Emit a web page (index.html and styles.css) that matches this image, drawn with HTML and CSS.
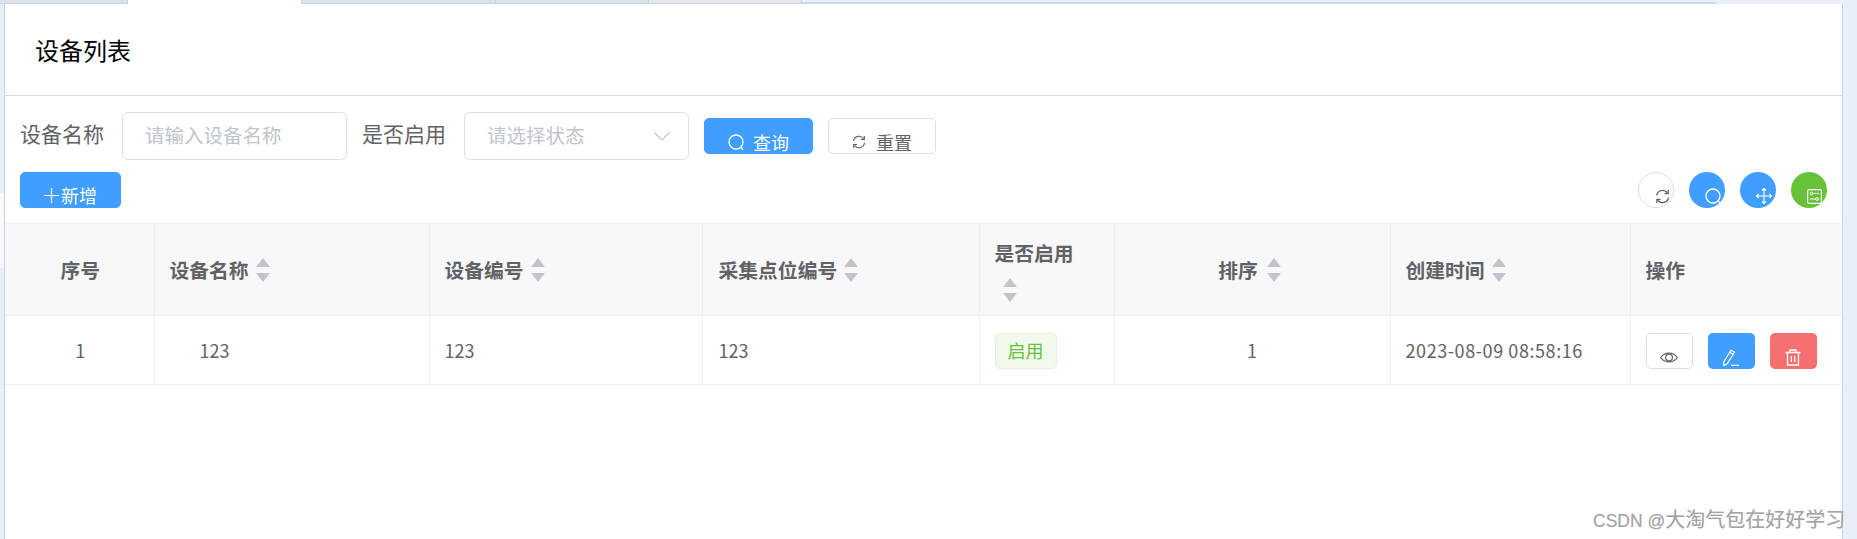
FILE: index.html
```html
<!DOCTYPE html>
<html lang="zh-CN">
<head>
    <meta charset="UTF-8">
    <title>设备列表</title>
    <link rel="stylesheet" href="styles.css">
</head>
<body>
    <div class="tabs">
        <div class="tab tab-grey tab-first"></div>
        <div class="tab tab-active"></div>
        <div class="tab tab-grey tab-third"></div>
        <div class="tab tab-grey tab-fourth"></div>
        <div class="tab tab-soft"></div>
        <div class="tab tab-line"></div>
    </div>

    <main class="card">
        <header class="card-head">
            <h2>设备列表</h2>
        </header>

        <form class="search-row">
            <label class="label">设备名称</label>
            <div class="field field-input"><span class="placeholder">请输入设备名称</span></div>
            <label class="label">是否启用</label>
            <div class="field field-select">
                <span class="placeholder">请选择状态</span>
                <svg class="chevron" width="16" height="9" viewBox="0 0 16 9"><path d="M.5.5 8 8 15.500.5" fill="none" stroke="#c0c4cc" stroke-width="1.200"/></svg>
            </div>
            <button type="button" class="btn btn-primary btn-query">
                <svg width="16" height="17" viewBox="0 0 16 17"><circle cx="8" cy="8" r="7" fill="none" stroke="#fff" stroke-width="1.300"/><path d="m12.800 13 2.400 3" stroke="#fff" stroke-width="1.300"/></svg>
                <span>查询</span>
            </button>
            <button type="button" class="btn btn-plain btn-reset">
                <svg width="14" height="14" viewBox="0 0 14 14"><path d="M1.500 6A5.600 5.600 0 0 1 11.500 3.500M12.500 8A5.600 5.600 0 0 1 2.500 10.500" fill="none" stroke="#606266" stroke-width="1.200"/><path d="M12.300 1v3.400H9M1.700 13V9.600H5" fill="none" stroke="#606266" stroke-width="1.200"/></svg>
                <span>重置</span>
            </button>
        </form>

        <div class="tool-row">
            <button type="button" class="btn btn-primary btn-add">
                <svg width="15" height="15" viewBox="0 0 15 15"><path d="M0 7.500h15M7.500 0v15" stroke="#fff" stroke-width="1.200"/></svg>
                <span>新增</span>
            </button>
            <div class="round-tools">
                <button type="button" class="round round-plain">
                    <svg width="15" height="15" viewBox="0 0 14 14"><path d="M1.500 6A5.600 5.600 0 0 1 11.500 3.500M12.500 8A5.600 5.600 0 0 1 2.500 10.500" fill="none" stroke="#606266" stroke-width="1.200"/><path d="M12.300 1v3.400H9M1.700 13V9.600H5" fill="none" stroke="#606266" stroke-width="1.200"/></svg>
                </button>
                <button type="button" class="round round-blue">
                    <svg width="17" height="17" viewBox="0 0 17 17"><circle cx="8" cy="8" r="7" fill="none" stroke="#fff" stroke-width="1.300"/><path d="m13 13 3 3" stroke="#fff" stroke-width="1.300"/></svg>
                </button>
                <button type="button" class="round round-blue">
                    <svg width="16" height="16" viewBox="0 0 16 16"><path d="M8 .5v15M.5 8h15M6 2.500 8 .5l2 2M6 13.500l2 2 2-2M2.500 6l-2 2 2 2M13.500 6l2 2-2 2" fill="none" stroke="#fff" stroke-width="1.200"/></svg>
                </button>
                <button type="button" class="round round-green">
                    <svg width="15" height="15" viewBox="0 0 15 15"><rect x=".6" y=".6" width="13.800" height="13.800" rx="1.500" fill="none" stroke="#fff" stroke-width="1.200"/><circle cx="4.500" cy="4.500" r="1.400" fill="none" stroke="#fff"/><circle cx="10" cy="10" r="1.400" fill="none" stroke="#fff"/><path d="M6 4.500h6M3 10h5.500" stroke="#fff"/></svg>
                </button>
            </div>
        </div>

        <table class="grid">
            <colgroup>
                <col class="col-index">
                <col class="col-name">
                <col class="col-code">
                <col class="col-point">
                <col class="col-status">
                <col class="col-sort">
                <col class="col-time">
                <col class="col-action">
            </colgroup>
            <thead>
                <tr>
                    <th class="center">序号</th>
                    <th><div class="th-cell">设备名称<i class="caret"></i></div></th>
                    <th><div class="th-cell">设备编号<i class="caret"></i></div></th>
                    <th class="cell-point"><div class="th-cell">采集点位编号<i class="caret"></i></div></th>
                    <th><div class="th-cell th-stack">是否启用<i class="caret"></i></div></th>
                    <th><div class="th-cell th-center">排序<i class="caret"></i></div></th>
                    <th><div class="th-cell">创建时间<i class="caret"></i></div></th>
                    <th>操作</th>
                </tr>
            </thead>
            <tbody>
                <tr>
                    <td class="center">1</td>
                    <td class="indent">123</td>
                    <td>123</td>
                    <td class="cell-point">123</td>
                    <td><span class="tag">启用</span></td>
                    <td class="center">1</td>
                    <td class="time">2023-08-09 08:58:16</td>
                    <td>
                        <div class="actions">
                            <button type="button" class="act act-plain">
                                <svg width="18" height="13" viewBox="0 0 18 13"><path d="M.6 6.500C4.500.6 13.500.6 17.400 6.500 13.500 12.400 4.500 12.400.6 6.500Z" fill="none" stroke="#606266" stroke-width="1.200"/><circle cx="9" cy="6.500" r="3.400" fill="none" stroke="#606266" stroke-width="1.200"/></svg>
                            </button>
                            <button type="button" class="act act-blue">
                                <svg width="16" height="17" viewBox="0 0 16 17"><path d="M8 1.200 11.500 3.300 4 15 .8 16.400.8 12.800ZM6.800 3.300l3.300 2.100" fill="none" stroke="#fff" stroke-width="1.200"/><path d="M8 16.300h8" stroke="#fff" stroke-width="1.200"/></svg>
                            </button>
                            <button type="button" class="act act-red">
                                <svg width="16" height="17" viewBox="0 0 16 17"><path d="M.5 3.500h15M5 3.500V1h6v2.500M2.500 3.500V16h11V3.500M6.300 7v6M9.700 7v6" fill="none" stroke="#fff" stroke-width="1.300"/></svg>
                            </button>
                        </div>
                    </td>
                </tr>
            </tbody>
        </table>
    </main>

    <div class="watermark">CSDN @<span class="watermark-cn">大淘气包在好好学习</span></div>
</body>
</html>
```

FILE: styles.css
```css
*{
    box-sizing: border-box;
}

body{
    margin: 0;
    width: 1857px;
    height: 539px;
    overflow: hidden;
    display: flex;
    flex-direction: column;
    background-color: #e9eff8;
    font-family: "Noto Sans CJK SC", "Noto Sans", sans-serif;
    color: #606266;
}

/* tabs row, only its bottom sliver is visible */
.tabs{
    display: flex;
    height: 4px;
    flex: none;
}

.tab{
    border-right: 1px solid #c9d1de;
}

.tab-grey{
    background-color: #dde3ed;
    border-bottom: 1px solid #ccd4e2;
}

.tab-first{ width: 128px; }
.tab-third{ width: 194px; }
.tab-fourth{ width: 153px; }

.tab-active{
    width: 174px;
    background-color: #fff;
}

.tab-soft{
    width: 153px;
    background-color: #e3e7ef;
    border-bottom: 1px solid #ccd4e2;
}

.tab-line{
    width: 914px;
    border-right: none;
    border-bottom: 2px solid #cdd6e6;
}

.card{
    position: relative;
    flex: 1;
    width: 1839px;
    margin-left: 4px;
    background-color: #fff;
    border-left: 1px solid #ccd4e4;
    border-right: 1px solid #ccd4e4;
}

/* lighter patch of the page behind, left of the card */
.card::before{
    content: "";
    position: absolute;
    left: -5px;
    top: 189px;
    width: 4px;
    height: 75px;
    background-color: #f7f9fc;
}

.card-head{
    height: 92px;
    padding: 0 0 1px 30px;
    display: flex;
    align-items: center;
    border-bottom: 1px solid #d3dbe8;
}

.card-head h2{
    margin: 0;
    font-size: 24px;
    font-weight: 400;
    color: #000;
}

.search-row{
    display: flex;
    align-items: flex-start;
    padding: 16px 0 0 15px;
}

.label{
    height: 48px;
    line-height: 42px;
    font-size: 21px;
    white-space: nowrap;
}

.field{
    height: 48px;
    display: flex;
    align-items: center;
    justify-content: space-between;
    padding: 0 18px 3px 22px;
    border: 1px solid #dcdfe6;
    border-radius: 6px;
}

.field-input{
    width: 225px;
    margin: 0 15px 0 18px;
}

.field-select{
    width: 225px;
    margin-left: 18px;
}

.chevron{
    margin-top: 3px;
}

.placeholder{
    font-size: 19.500px;
    color: #c0c4cc;
}

.btn{
    height: 36px;
    display: flex;
    align-items: center;
    justify-content: center;
    padding: 12px 0 0;
    overflow: hidden;
    font-family: inherit;
    font-size: 18px;
    border-radius: 5px;
}

.btn-primary{
    color: #fff;
    background-color: #409eff;
    border: 1px solid #409eff;
}

.btn-plain{
    color: #606266;
    background-color: #fff;
    border: 1px solid #dcdfe6;
}

.btn-query{
    width: 109px;
    margin: 6px 0 0 15px;
    gap: 9px;
}

.btn-reset{
    width: 108px;
    margin: 6px 0 0 15px;
    gap: 10px;
}

.btn-add{
    width: 101px;
    gap: 2px;
    padding-top: 10px;
}

.tool-row{
    display: flex;
    justify-content: space-between;
    padding: 12px 15px 0 15px;
}

.round-tools{
    display: flex;
    gap: 15px;
}

.round{
    width: 36px;
    height: 36px;
    display: flex;
    align-items: center;
    justify-content: center;
    padding: 12px 0 0 12px;
    border-radius: 50%;
    border: 1px solid transparent;
}

.round-plain{
    background-color: #fff;
    border-color: #dcdfe6;
}

.round-blue{
    background-color: #409eff;
}

.round-green{
    background-color: #67c23a;
    padding-left: 10px;
}

.grid{
    width: 1836px;
    margin-top: 15px;
    table-layout: fixed;
    border-collapse: collapse;
    font-size: 18px;
}

.col-index{ width: 149px; }
.col-name{ width: 275px; }
.col-code{ width: 273px; }
.col-point{ width: 277px; }
.col-status{ width: 135px; }
.col-sort{ width: 276px; }
.col-time{ width: 240px; }
.col-action{ width: 211px; }

.grid th,
.grid td{
    padding: 0 15px;
    text-align: left;
    border: 1px solid #ebeef5;
}

.grid th{
    height: 92px;
    font-size: 19.800px;
    font-weight: 700;
    background-color: #f8f8f9;
}

.grid td{
    height: 69px;
}

.grid .center{
    text-align: center;
}

.grid .indent{
    padding-left: 45px;
}

.grid .cell-point{
    padding-left: 16px;
}

.grid .time{
    letter-spacing: .58px;
}

.grid th:first-child,
.grid td:first-child{
    border-left: none;
    padding: 0 14px 0 16px;
}

.grid th:last-child,
.grid td:last-child{
    border-right: none;
}

.th-cell{
    display: flex;
    align-items: center;
    gap: 7px;
}

.th-stack{
    flex-direction: column;
    align-items: flex-start;
    gap: 11px;
}

.th-stack .caret{
    margin-left: 8px;
}

.th-center{
    justify-content: center;
    gap: 9px;
    padding-right: 4px;
}

.caret{
    display: flex;
    flex-direction: column;
    gap: 6px;
    width: 15px;
}

.caret::before,
.caret::after{
    content: "";
    width: 0;
    height: 0;
    border-left: 7.500px solid transparent;
    border-right: 7.500px solid transparent;
}

.caret::before{
    border-bottom: 9px solid #c0c4cc;
}

.caret::after{
    border-top: 9px solid #c0c4cc;
}

.tag{
    display: inline-block;
    height: 36px;
    line-height: 33px;
    margin-top: 2px;
    padding: 0 12px;
    vertical-align: middle;
    color: #67c23a;
    background-color: #f0f9eb;
    border: 1px solid #e1f3d8;
    border-radius: 5px;
}

.actions{
    display: flex;
    gap: 15px;
    margin-top: 2px;
}

.act{
    width: 47px;
    height: 36px;
    padding: 12px 0 0;
    display: flex;
    align-items: center;
    justify-content: center;
    border-radius: 5px;
    border: 1px solid transparent;
}

.act-plain{
    background-color: #fff;
    border-color: #dcdfe6;
}

.act-blue{
    background-color: #409eff;
}

.act-red{
    background-color: #f77070;
}

.watermark{
    position: absolute;
    left: 1593px;
    top: 504px;
    white-space: nowrap;
    font-family: "Liberation Sans", "Noto Sans CJK SC", sans-serif;
    font-size: 17.500px;
    color: #a3a3a3;
    text-shadow: 0 0 1px #ddd;
}

.watermark-cn{
    font-size: 20px;
}
```
